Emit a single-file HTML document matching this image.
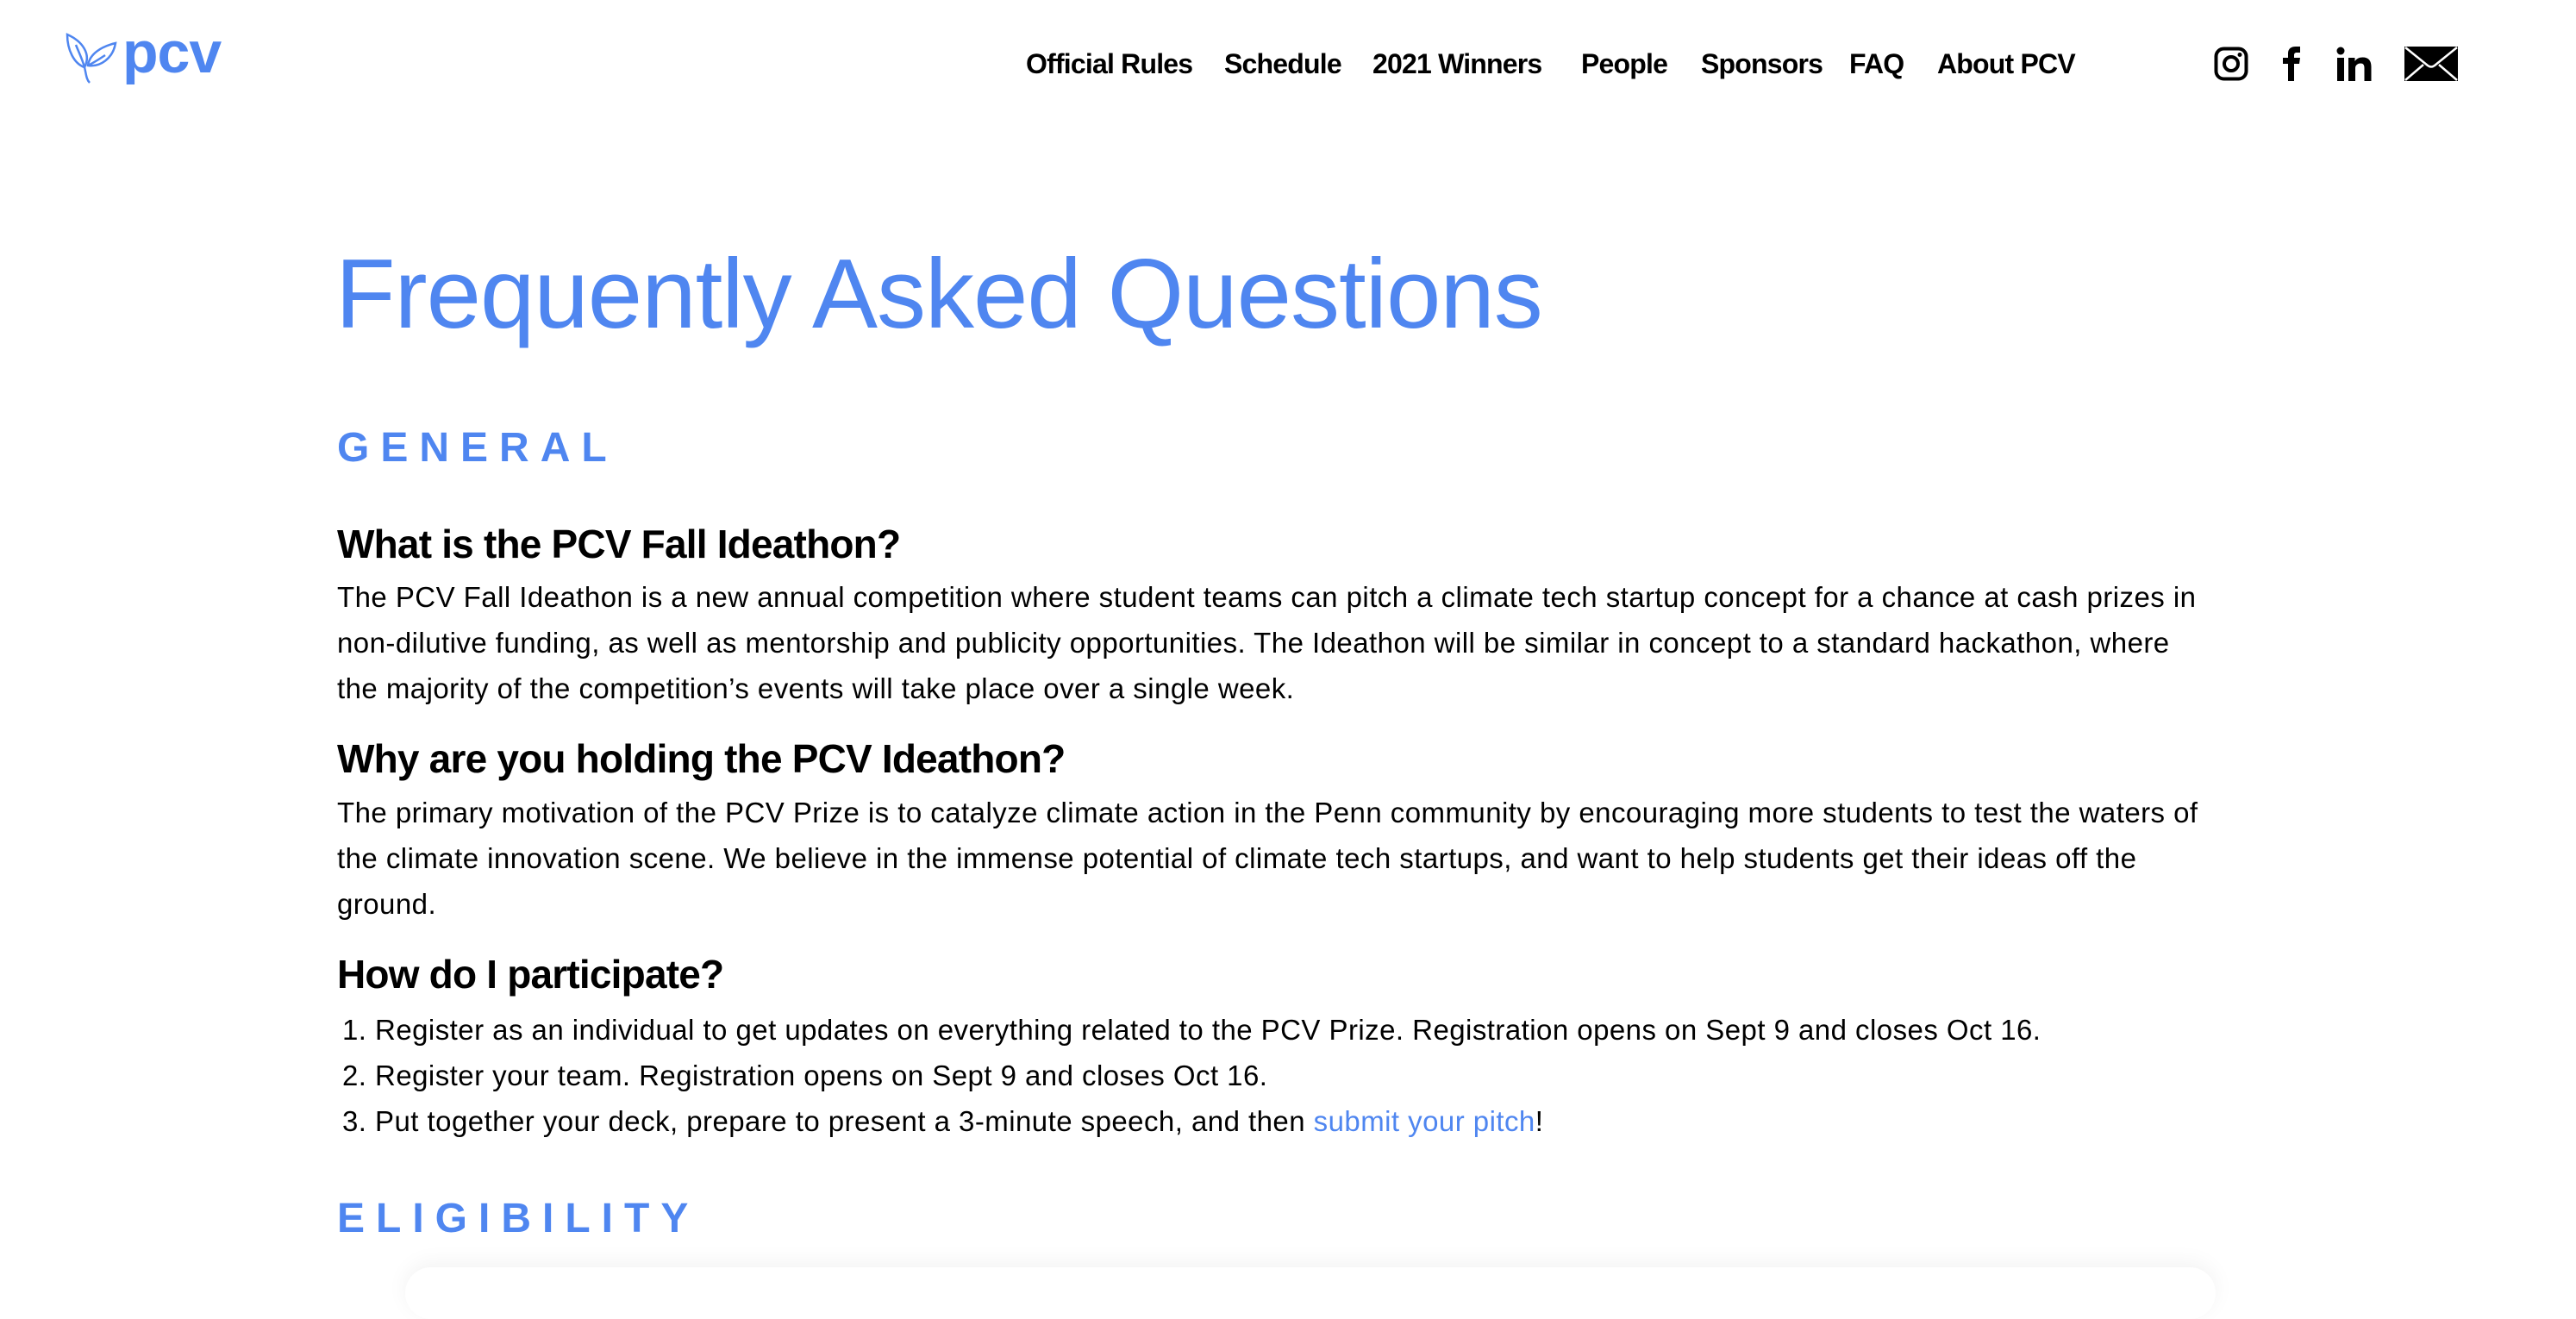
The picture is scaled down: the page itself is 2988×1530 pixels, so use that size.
<!DOCTYPE html>
<html><head><meta charset="utf-8"><style>
*{margin:0;padding:0;box-sizing:border-box}
body{width:2988px;height:1480px;background:#fff;font-family:"Liberation Sans",sans-serif;color:#000;position:relative;overflow:hidden}
.a{position:absolute;white-space:nowrap}
.nav{top:56px;font-size:32px;font-weight:bold;letter-spacing:-0.8px}
.blue{color:#4f86f0}
.h1{left:389px;top:276px;font-size:114px;letter-spacing:-1px;color:#4f86f0}
.sec{left:391px;font-size:48px;letter-spacing:13px;font-weight:bold;color:#4f86f0}
.q{left:391px;font-size:46px;font-weight:bold;letter-spacing:-0.8px}
.p{left:391px;font-size:33px;letter-spacing:0.45px;line-height:53px}
</style></head><body>
<svg class="a" style="left:76px;top:38px" width="62" height="62" viewBox="0 0 62 62" fill="none" stroke="#4f86f0" stroke-width="2.5">
<path d="M2 2 C20 10 30 25 22 40 C10 36 2 20 2 2Z"/><path d="M12 14 C16 24 20 32 22 40 C24 48 24 54 28 58"/>
<path d="M58 12 C55 30 40 40 26 38 C28 24 42 16 58 12Z"/><path d="M26 38 C34 34 40 30 46 26"/>
</svg>
<div class="a blue" style="left:142px;top:22px;font-size:68px;font-weight:bold;letter-spacing:-1px">pcv</div>
<div class="a nav" style="left:1190px">Official Rules</div>
<div class="a nav" style="left:1420px">Schedule</div>
<div class="a nav" style="left:1592px">2021 Winners</div>
<div class="a nav" style="left:1834px">People</div>
<div class="a nav" style="left:1973px">Sponsors</div>
<div class="a nav" style="left:2145px">FAQ</div>
<div class="a nav" style="left:2247px">About PCV</div>
<svg class="a" style="left:2568px;top:54px" width="40" height="40" viewBox="0 0 40 40"><rect x="2.5" y="2.5" width="35" height="35" rx="9" fill="none" stroke="#000" stroke-width="4"/><circle cx="20" cy="20" r="8" fill="none" stroke="#000" stroke-width="4"/><circle cx="30" cy="9.5" r="2.5"/></svg>
<svg class="a" style="left:2646px;top:54px" width="26" height="40" viewBox="0 0 26 40"><path d="M8 40V20H2v-7h6V8c0-6 4-8 9-8h5v7h-4c-2 0-3 1-3 3v3h7l-1 7h-6v20z"/></svg>
<svg class="a" style="left:2710px;top:54px" width="42" height="40" viewBox="0 0 42 40"><circle cx="5" cy="5" r="4.5"/><rect x="1" y="13" width="8" height="27"/><path d="M14 13h7.5v4c2-3 5-4.5 9-4.5 7 0 10 4 10 11V40h-8V25c0-4-1.5-5.5-4.5-5.5S22 21.5 22 25V40h-8z"/></svg>
<svg class="a" style="left:2789px;top:54px" width="62" height="40" viewBox="0 0 62 40"><rect width="62" height="40"/><path d="M1 1 L27 22 Q31 25 35 22 L61 1 M1 39 L22 21 M61 39 L40 21" fill="none" stroke="#fff" stroke-width="2.5"/></svg>
<div class="a h1">Frequently Asked Questions</div>
<div class="a sec" style="top:492px">GENERAL</div>
<div class="a q" style="top:604px">What is the PCV Fall Ideathon?</div>
<div class="a p" style="top:666px">The PCV Fall Ideathon is a new annual competition where student teams can pitch a climate tech startup concept for a chance at cash prizes in<br>non-dilutive funding, as well as mentorship and publicity opportunities. The Ideathon will be similar in concept to a standard hackathon, where<br>the majority of the competition’s events will take place over a single week.</div>
<div class="a q" style="top:853px">Why are you holding the PCV Ideathon?</div>
<div class="a p" style="top:916px">The primary motivation of the PCV Prize is to catalyze climate action in the Penn community by encouraging more students to test the waters of<br>the climate innovation scene. We believe in the immense potential of climate tech startups, and want to help students get their ideas off the<br>ground.</div>
<div class="a q" style="top:1103px">How do I participate?</div>
<div class="a p" style="top:1168px;left:397px">1. Register as an individual to get updates on everything related to the PCV Prize. Registration opens on Sept 9 and closes Oct 16.<br>2. Register your team. Registration opens on Sept 9 and closes Oct 16.<br>3. Put together your deck, prepare to present a 3-minute speech, and then <span class="blue">submit your pitch</span>!</div>
<div class="a sec" style="top:1386px">ELIGIBILITY</div>
<div class="a" style="left:470px;top:1470px;width:2100px;height:60px;border-radius:30px;box-shadow:0 -6px 24px rgba(0,0,0,0.05)"></div>
</body></html>
